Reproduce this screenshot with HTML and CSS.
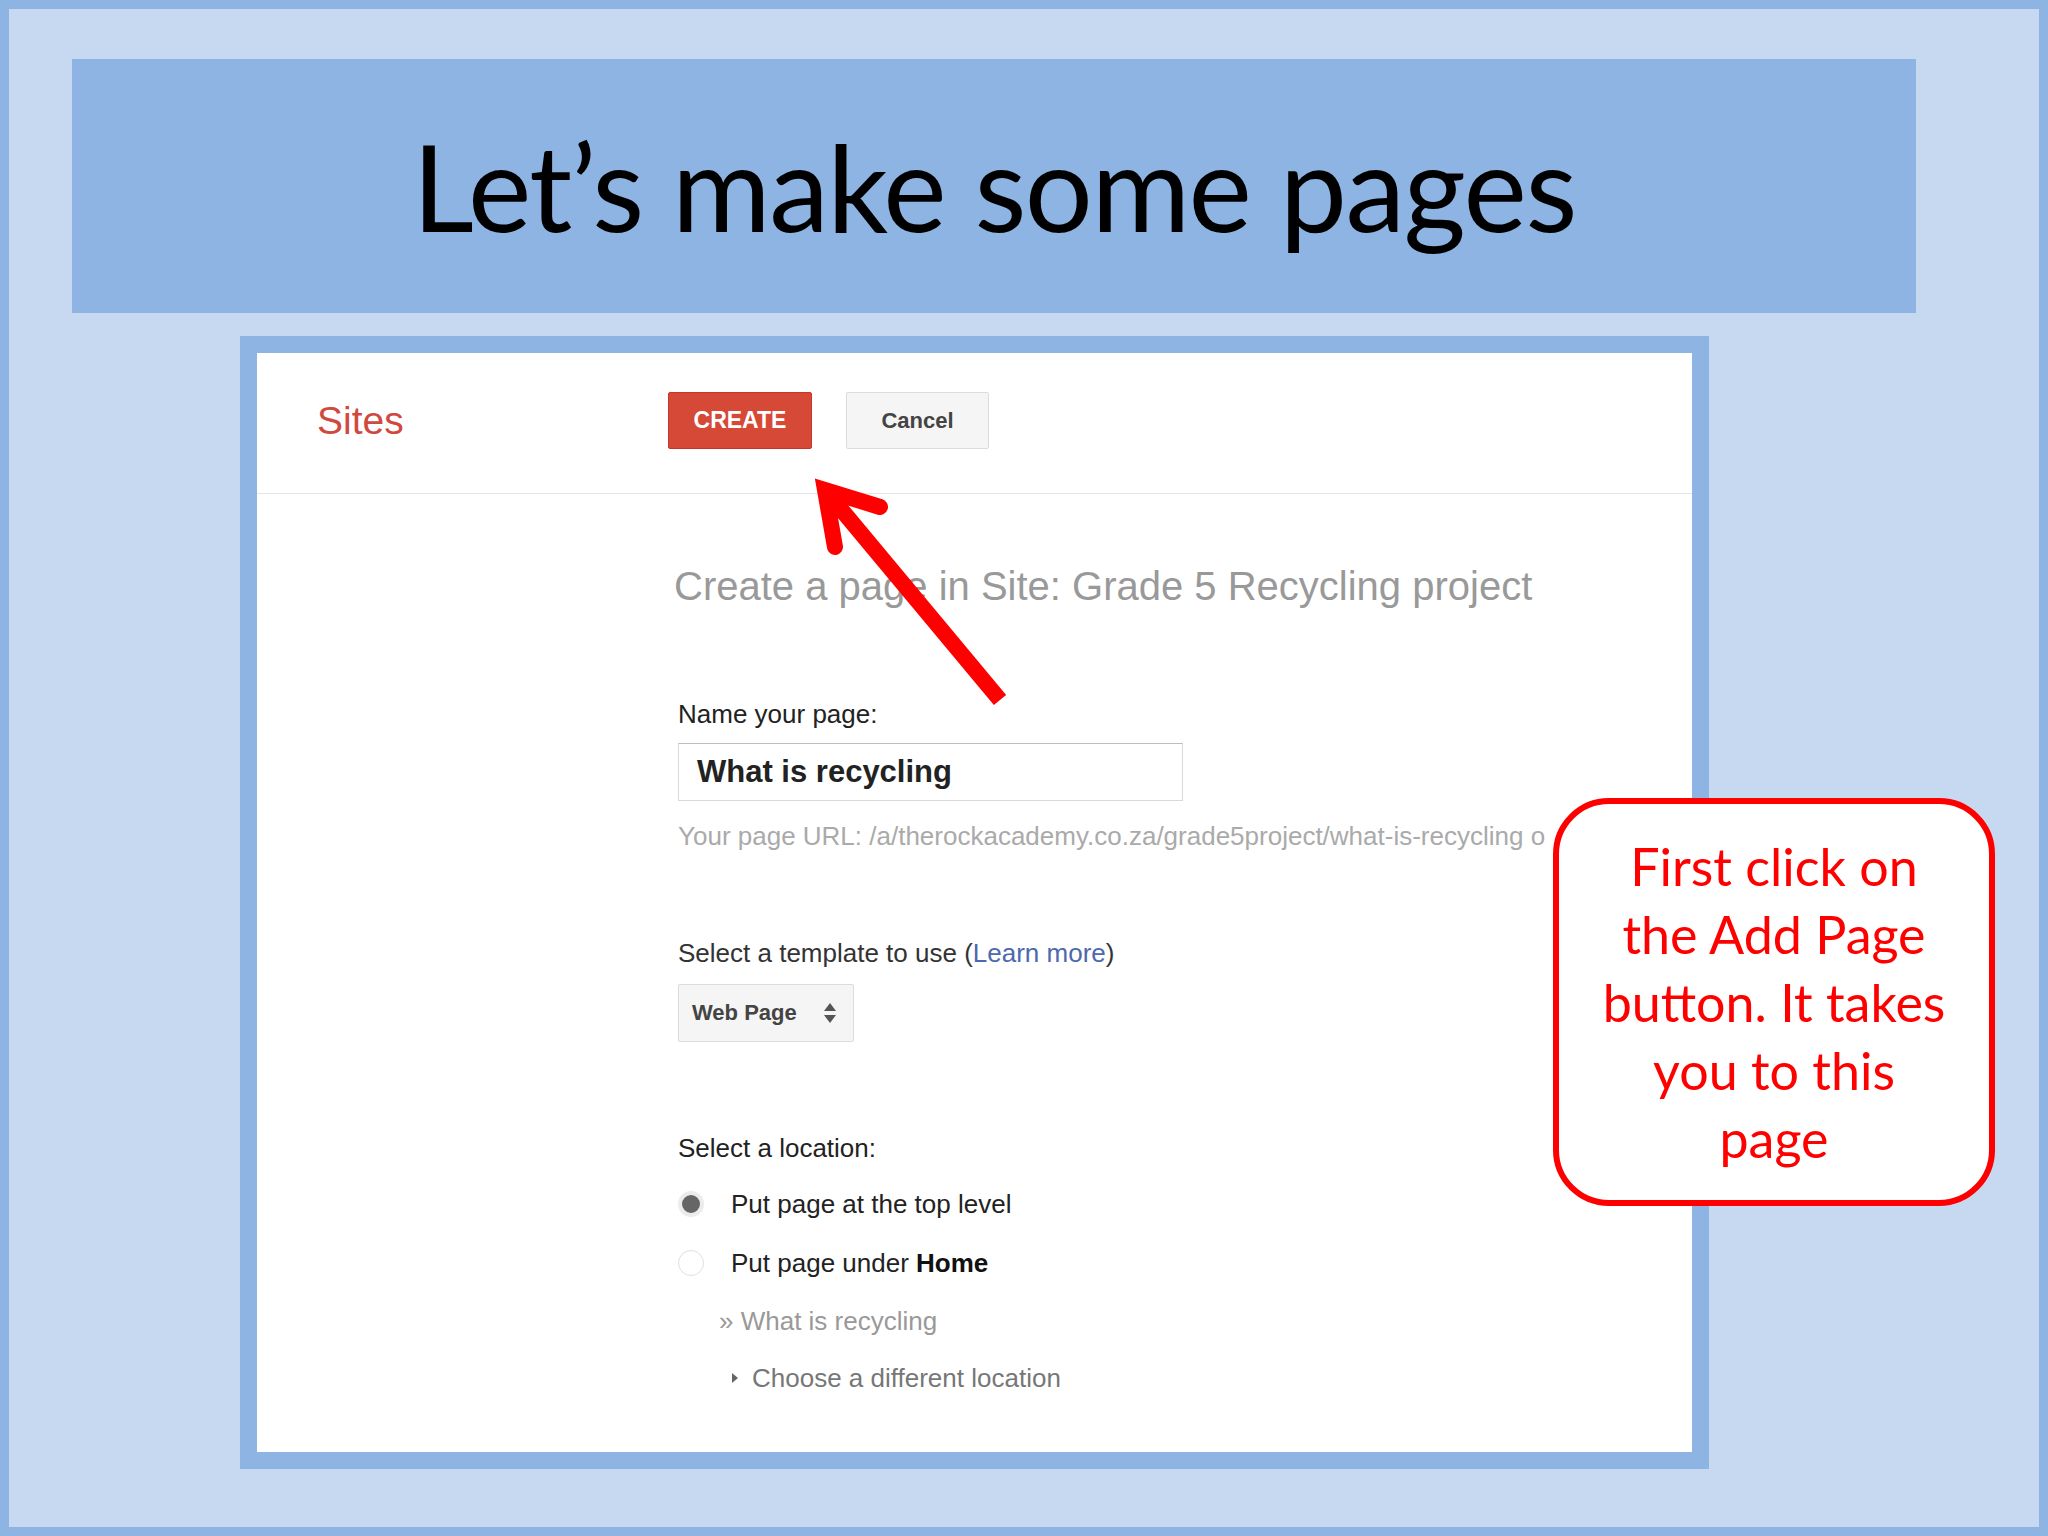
FILE: index.html
```html
<!DOCTYPE html>
<html lang="en">
<head>
    <meta charset="UTF-8">
    <title>Let’s make some pages</title>
    <link rel="stylesheet" href="styles.css">
</head>
<body>
    <div class="slide">
        <div class="banner">
            <h1>Let’s make some pages</h1>
        </div>

        <div class="frame">
            <div class="shot">
                <div class="topbar">
                    <div class="logo">Sites</div>
                    <button class="btn btn-create">CREATE</button>
                    <button class="btn btn-cancel">Cancel</button>
                </div>

                <div class="form">
                    <h2 class="page-title">Create a page in Site: Grade 5 Recycling project</h2>

                    <div class="label name-label">Name your page:</div>
                    <div class="name-input">What is recycling</div>
                    <div class="url">Your page URL: /a/therockacademy.co.za/grade5project/what-is-recycling o</div>

                    <div class="label template-label">Select a template to use (<span class="learn">Learn more</span>)</div>
                    <div class="select">
                        <span>Web Page</span>
                        <svg class="updown" width="14" height="22" viewBox="0 0 14 22">
                            <path d="M7 1 L13 9 L1 9 Z" fill="#555"/>
                            <path d="M1 13 L13 13 L7 21 Z" fill="#555"/>
                        </svg>
                    </div>

                    <div class="label location-label">Select a location:</div>
                    <div class="radio-row first">
                        <span class="radio checked"></span>
                        <span class="label">Put page at the top level</span>
                    </div>
                    <div class="radio-row">
                        <span class="radio"></span>
                        <span class="label">Put page under <b>Home</b></span>
                    </div>
                    <div class="sub">» What is recycling</div>
                    <div class="choose"><span class="tri"></span>Choose a different location</div>
                </div>
            </div>
        </div>
    </div>

    <!-- red arrow pointing at CREATE -->
    <svg class="arrow" width="240" height="260" viewBox="790 460 240 260">
        <path d="M835 547 L825 490 L880 507" fill="none" stroke="#ff0000" stroke-width="16" stroke-linecap="round" stroke-linejoin="miter"/>
        <path d="M825 490 L1000 700" fill="none" stroke="#ff0000" stroke-width="16"/>
    </svg>

    <div class="callout">
        <p>First click on<br>the Add Page<br>button. It takes<br>you to this<br>page</p>
    </div>
</body>
</html>
```

FILE: styles.css
```css
body { margin: 0; position: relative; width: 2048px; height: 1536px; overflow: hidden; font-family: "Liberation Sans", Arial, sans-serif; }
.slide { box-sizing: border-box; width: 2048px; height: 1536px; border: 9px solid #8eb4e3; background: #c6d9f1; padding: 50px 0 0 63px; }
.banner { width: 1844px; height: 254px; background: #8eb4e3; display: flex; align-items: center; justify-content: center; }
.banner h1 { margin: 0; font-family: Lato, "Open Sans", sans-serif; font-weight: 400; font-size: 120px; letter-spacing: -1.5px; color: #000; }

.frame { box-sizing: border-box; width: 1469px; height: 1133px; margin: 23px 0 0 168px; border: 17px solid #8eb4e3; background: #fff; }
.shot { height: 100%; overflow: hidden; }

.topbar { height: 135px; padding: 0 0 5px 60px; border-bottom: 1px solid #e5e5e5; display: flex; align-items: center; }
.logo { width: 351px; font-size: 39px; color: #d0493f; }
.btn { box-sizing: border-box; height: 57px; border-radius: 2px; font-family: inherit; font-weight: bold; font-size: 23px; padding: 0; }
.btn-create { width: 144px; background: #d64937; border: 1px solid #c53727; color: #fff; }
.btn-cancel { width: 143px; margin-left: 34px; background: #f5f5f5; border: 1px solid #dcdcdc; color: #444; font-size: 22px; }

.form { padding-left: 421px; }
.page-title { margin: 68px 0 0 -4px; font-size: 40px; line-height: 48px; font-weight: normal; color: #999; white-space: nowrap; }
.label { font-size: 26px; line-height: 30px; color: #222; }
.label b { color: #111; }
.name-label { margin-top: 89px; }
.name-input { box-sizing: border-box; width: 505px; height: 58px; margin-top: 14px; border: 1px solid #d9d9d9; border-top-color: #bdbdbd; padding-left: 18px; font-size: 31px; font-weight: bold; line-height: 56px; color: #222; }
.url { margin-top: 20px; font-size: 26px; line-height: 30px; color: #aaa; white-space: nowrap; }
.template-label { margin-top: 87px; color: #333; }
.learn { color: #4d68ad; }
.select { box-sizing: border-box; width: 176px; height: 58px; margin-top: 16px; padding-left: 13px; display: flex; align-items: center; gap: 26px; background: #f5f5f5; border: 1px solid #dcdcdc; border-radius: 2px; font-size: 22px; font-weight: bold; color: #444; }
.location-label { margin-top: 91px; }

.radio-row { display: flex; align-items: center; height: 30px; margin-top: 29px; }
.radio-row.first { margin-top: 26px; }
.radio { box-sizing: border-box; width: 26px; height: 26px; margin-right: 27px; border-radius: 50%; border: 1px solid #e0e0e0; background: #fff; }
.radio.checked { border: 4px solid #ececec; background: #666; }
.sub { margin: 28px 0 0 41px; font-size: 26px; line-height: 30px; color: #999; }
.choose { margin: 27px 0 0 54px; font-size: 26px; line-height: 30px; color: #777; display: flex; align-items: center; }
.tri { width: 0; height: 0; margin-right: 14px; border-top: 5px solid transparent; border-bottom: 5px solid transparent; border-left: 6px solid #666; }

.arrow { position: absolute; left: 790px; top: 460px; }

.callout { position: absolute; left: 1553px; top: 798px; box-sizing: border-box; width: 442px; height: 408px; border: 6px solid #ff0000; border-radius: 56px; background: #fff; display: flex; align-items: center; justify-content: center; }
.callout p { margin: 0; text-align: center; font-family: Lato, "Open Sans", sans-serif; font-size: 52px; line-height: 68px; color: #ff0000; }
```
